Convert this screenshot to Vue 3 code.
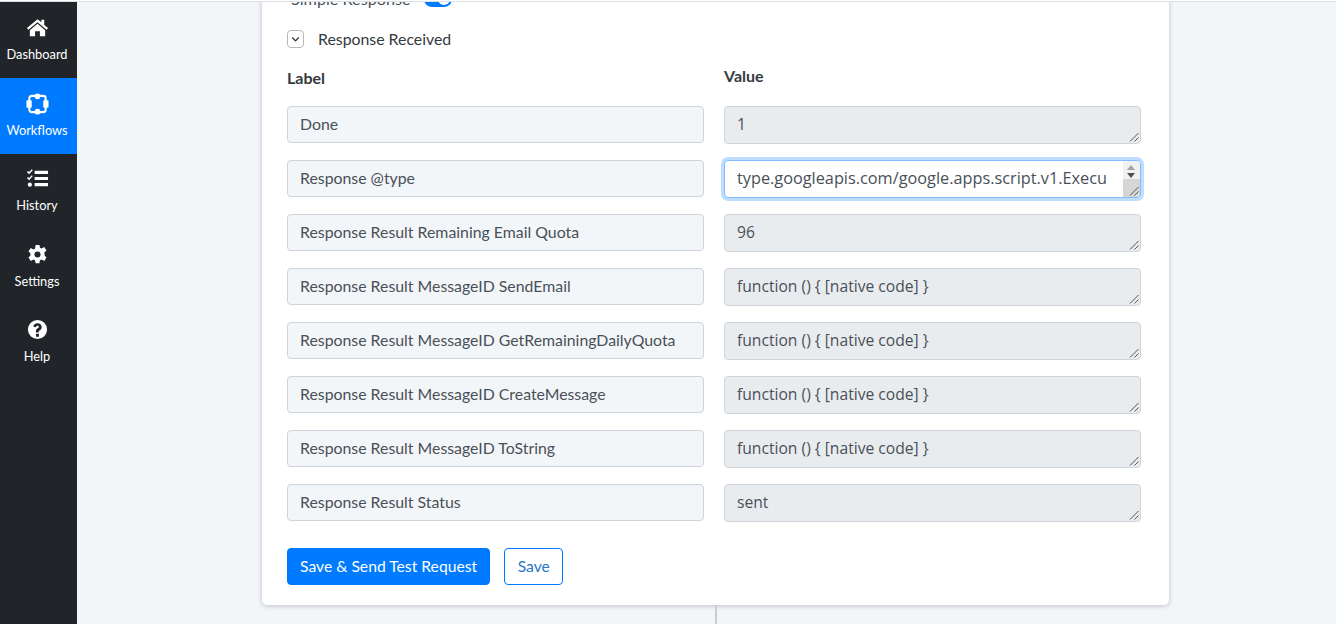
<template>
  <div class="page">
    <div class="topline"></div>
    <div class="content">
      <nav class="sidebar">
        <a v-for="item in navItems" :key="item.label" class="nav-item" :class="{ active: item.active }">
          <svg class="nav-icon" viewBox="0 0 24 24" v-html="item.icon"></svg>
          <span>{{ item.label }}</span>
        </a>
      </nav>

      <main class="main">
        <div class="connector"></div>
        <section class="card">
          <div class="simple-row">
            <span>Simple Response</span>
            <span class="toggle"><i></i></span>
          </div>

          <div class="received">
            <span class="chevron">
              <svg viewBox="0 0 16 16"><path d="M4.500 6.500 8 10l3.500-3.500" /></svg>
            </span>
            <span>Response Received</span>
          </div>

          <div class="grid">
            <div class="col">
              <h4 class="label-head">Label</h4>
              <div v-for="row in rows" :key="row.label" class="label-box">{{ row.label }}</div>
            </div>
            <div class="col">
              <h4 class="value-head">Value</h4>
              <div v-for="row in rows" :key="row.label" class="value-box" :class="{ focused: row.focused }">
                <span class="value-text">{{ row.value }}</span>
                <span v-if="row.focused" class="scrollbar">
                  <i class="up"></i>
                  <i class="down"></i>
                </span>
                <svg class="grip" viewBox="0 0 10 10"><path d="M9.500 1 1 9.500M9.500 5.500 5.500 9.500" /></svg>
              </div>
            </div>
          </div>

          <div class="actions">
            <button class="btn primary">Save &amp; Send Test Request</button>
            <button class="btn outline">Save</button>
          </div>
        </section>
      </main>
    </div>
  </div>
</template>

<script setup>
const navItems = [
  {
    label: "Dashboard",
    icon: '<path d="M12 3.500 1 12.600l1.500 1.700L12 6.400l9.500 7.900 1.500-1.700-4-3.300V4h-3v2.600z"/><path d="M12 8.200 4 14.800V21h5.500v-5h5v5H20v-6.200z"/>',
  },
  {
    label: "Workflows",
    active: true,
    icon: '<rect x="3.500" y="4" width="17" height="17" rx="2.500" fill="none" stroke="currentColor" stroke-width="2.200"/><circle cx="12" cy="4.500" r="3"/><circle cx="12" cy="20.500" r="3"/><rect x="0.500" y="8.500" width="5.500" height="8" rx="1"/><rect x="18" y="8.500" width="5.500" height="8" rx="1"/>',
  },
  {
    label: "History",
    icon: '<path d="M9 4h14v3.200H9zM9 10.400h14v3.200H9zM9 16.800h14v3.200H9z"/><path d="M2.200 4.200l1 1L6 2.300l1.100 1-3.900 4.200L1 5.300zM2.200 10.400l1 1L6 8.500l1.100 1-3.900 4.200L1 11.500z"/><circle cx="4" cy="18.400" r="2.200"/>',
  },
  {
    label: "Settings",
    icon: '<path fill-rule="evenodd" d="M10 2h4l.6 3 1.700.8 2.700-1.500 2.400 3.400-2.200 2 .1 1.300.1 1-0 1 2 2-2.400 3.700-2.700-1.500-1.700.8-.6 3h-4l-.6-3-1.700-.8-2.700 1.500-2.400-3.700 2-2v-2.300l-2-2 2.400-3.400 2.700 1.500 1.700-.8zM12 8.800a3.200 3.200 0 1 0 0 6.400 3.200 3.200 0 0 0 0-6.400z"/>',
  },
  {
    label: "Help",
    icon: '<path fill-rule="evenodd" d="M12 2a10 10 0 1 1 0 20 10 10 0 0 1 0-20zm-1.500 14.500v3h3v-3zM12 5.500c-2.500 0-4 1.400-4.300 3.500l2.600.6c.2-1 .8-1.600 1.700-1.600s1.500.5 1.500 1.200c0 .7-.5 1.100-1.300 1.600-1 .7-1.800 1.400-1.800 3V15h2.800v-.4c0-.8.4-1.100 1.300-1.700 1.100-.7 1.900-1.700 1.900-3.200 0-2.600-1.900-4.200-4.400-4.200z"/>',
  },
];

const nativeCode = "function () { [native code] }";

const rows = [
  { label: "Done", value: "1" },
  { label: "Response @type", value: "type.googleapis.com/google.apps.script.v1.Execu\ntionResponse", focused: true },
  { label: "Response Result Remaining Email Quota", value: "96" },
  { label: "Response Result MessageID SendEmail", value: nativeCode },
  { label: "Response Result MessageID GetRemainingDailyQuota", value: nativeCode },
  { label: "Response Result MessageID CreateMessage", value: nativeCode },
  { label: "Response Result MessageID ToString", value: nativeCode },
  { label: "Response Result Status", value: "sent" },
];
</script>

<style>
html,
body {
  margin: 0;
  height: 624px;
  overflow: hidden;
  background: #f3f6f9;
}
</style>

<style scoped>
.page {
  display: flex;
  flex-direction: column;
  height: 624px;
  overflow: hidden;
  font-family: "Lato", "Open Sans", sans-serif;
  color: #495057;
}

.topline {
  position: relative;
  z-index: 2;
  flex: none;
  height: 1px;
  background: #fff;
  border-bottom: 1px solid #dcdfe3;
}

.content {
  flex: 1;
  display: flex;
  min-height: 0;
}

.sidebar {
  width: 77px;
  flex: none;
  padding-top: 0.4px;
  background: #212529;
}

.nav-item {
  display: flex;
  flex-direction: column;
  align-items: center;
  height: 75.6px;
  padding: 13.600px 3px 0 0;
  box-sizing: border-box;
  color: #fff;
  font-size: 12.8px;
}

.nav-item.active {
  background: #007bff;
}

.nav-icon {
  width: 23px;
  height: 23px;
  margin-bottom: 7px;
  fill: currentColor;
}

.main {
  flex: 1;
  position: relative;
  display: flex;
  padding-left: 185px;
}

/* line running to the next workflow step */
.connector {
  position: absolute;
  left: 638px;
  top: 603px;
  bottom: 0;
  width: 2px;
  background: #c9cdd1;
}

.card {
  width: 907px;
  height: 620px;
  margin-top: -17px;
  padding: 0 25px;
  flex: none;
  box-sizing: border-box;
  background: #fff;
  border-radius: 5px;
  box-shadow: 0 1px 5px rgba(60, 70, 90, 0.3);
  font-size: 15.85px;
}

.simple-row {
  display: flex;
  align-items: center;
  gap: 13px;
  height: 27px;
  padding-left: 4px;
  font-size: 16.200px;
}

.toggle {
  position: relative;
  display: block;
  width: 28px;
  height: 16px;
  border-radius: 8px;
  background: #007bff;
}

.toggle i {
  position: absolute;
  top: 2px;
  right: 2px;
  width: 12px;
  height: 12px;
  border-radius: 50%;
  background: #fff;
}

.received {
  display: flex;
  align-items: center;
  gap: 14px;
  height: 20px;
  margin-top: 16px;
  color: #343a40;
}

.chevron {
  display: flex;
  width: 15px;
  height: 16px;
  margin-top: 1px;
  border: 1px solid #b4b8bc;
  border-radius: 4px;
}

.chevron svg {
  width: 15px;
  height: 16px;
  fill: none;
  stroke: #343a40;
  stroke-width: 1.500;
}

.grid {
  display: grid;
  grid-template-columns: 417px 417px;
  column-gap: 20px;
}

.label-head,
.value-head {
  margin: 0;
  font-size: 16px;
  font-weight: 700;
  line-height: 20px;
  color: #343a40;
}

.label-head {
  margin-top: 20px;
  margin-bottom: 18px;
}

.value-head {
  margin-top: 18px;
  margin-bottom: 20px;
}

.label-box,
.value-box {
  position: relative;
  display: flex;
  align-items: center;
  box-sizing: border-box;
  padding: 0 12px 2px;
  border: 1px solid #ced4da;
  border-radius: 4px;
  overflow: hidden;
  white-space: pre;
}

.label-box {
  height: 37px;
  margin-bottom: 17px;
  background: #f3f6f9;
}

.value-box {
  height: 38px;
  margin-bottom: 16px;
  background: #e9ecef;
}

.value-text {
  font-family: "Open Sans", sans-serif;
  font-size: 15.65px;
  line-height: 24px;
}

/* textarea in focus: second wrapped line is cut by the box */
.value-box.focused {
  align-items: flex-start;
  padding-top: 5px;
  padding-bottom: 0;
  background: #fff;
  border-color: #80bdff;
  box-shadow: 0 0 0 3px rgba(0, 123, 255, 0.25);
}

.focused .value-text {
  font-size: 16.300px;
  line-height: 25px;
}

.scrollbar {
  position: absolute;
  top: 0;
  right: 0;
  bottom: 0;
  width: 17px;
  background: linear-gradient(#f1f1f1 0 18px, #d6d6d6 18px);
}

.scrollbar i {
  position: absolute;
  left: 4px;
  width: 0;
  height: 0;
  border-left: 4px solid transparent;
  border-right: 4px solid transparent;
}

.scrollbar .up {
  top: 4px;
  border-bottom: 5px solid #a3a3a3;
}

.scrollbar .down {
  top: 12px;
  border-top: 5px solid #505050;
}

.grip {
  position: absolute;
  right: 1px;
  bottom: 1px;
  width: 10px;
  height: 10px;
  fill: none;
  stroke: #555;
  stroke-width: 1;
}

.actions {
  display: flex;
  gap: 14px;
  margin-top: 10px;
}

.btn {
  height: 37px;
  padding: 0 12px 2px;
  border: 1px solid #007bff;
  border-radius: 4px;
  font-family: inherit;
  font-size: 15.7px;
}

.primary {
  background: #007bff;
  color: #fff;
}

.outline {
  padding: 0 12.500px 2px;
  background: #fff;
  color: #2a75c8;
}
</style>
